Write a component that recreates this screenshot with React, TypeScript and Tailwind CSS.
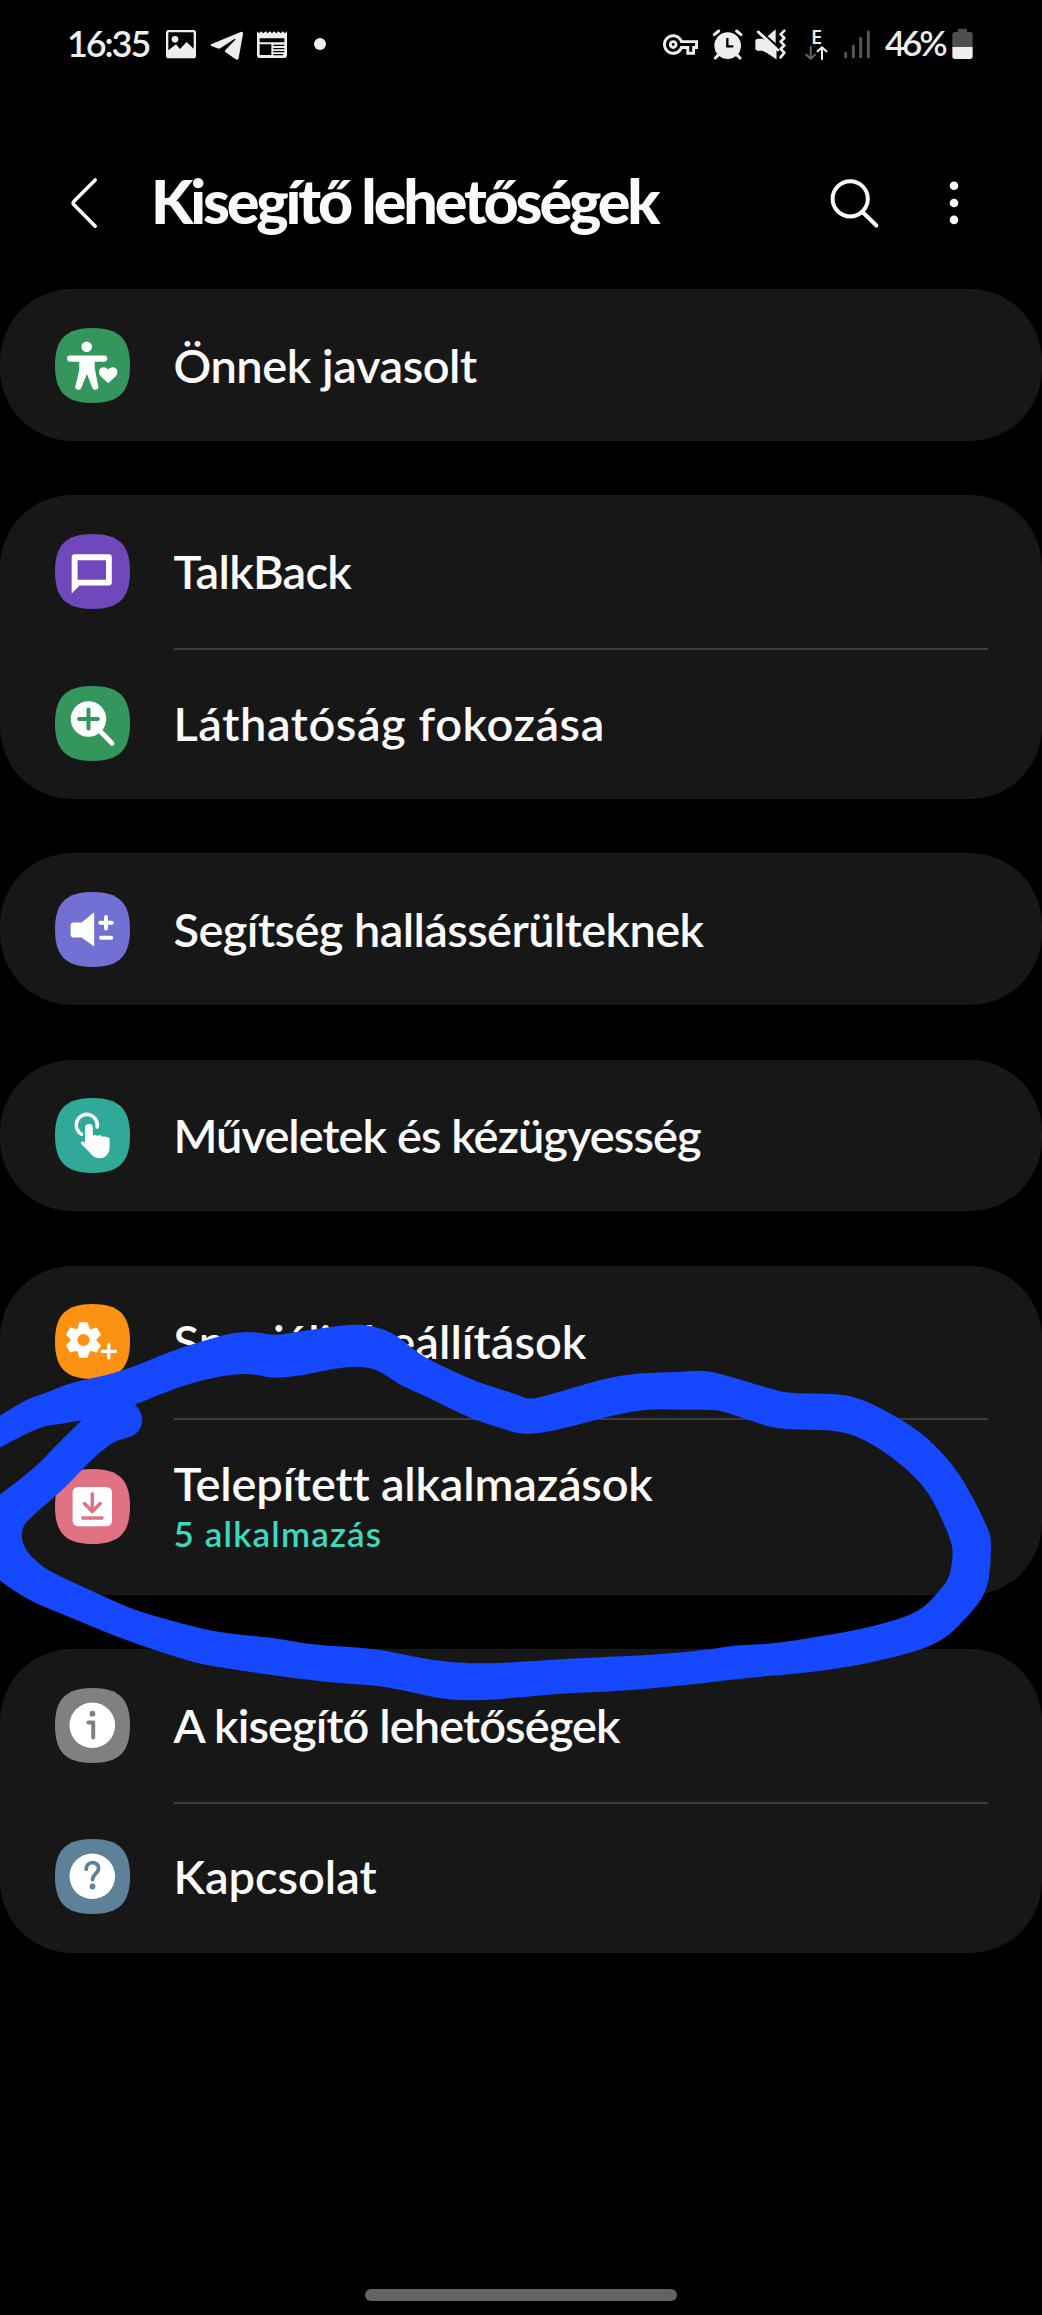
import React from 'react';
import { MdOutlineVpnKey } from 'react-icons/md';

interface SettingItem {
  label: string;
  tracking: string;
  tile: string;
  icon: React.ReactNode;
  sub?: string;
}

type Point = [number, number];

// Closed curve through the midpoints of the given points
const smooth = (pts: Point[]) => {
  const mid = (a: Point, b: Point) => `${(a[0] + b[0]) / 2} ${(a[1] + b[1]) / 2}`;
  const last = pts[pts.length - 1];
  return `M${mid(last, pts[0])}` + pts.map((p, i) => `Q${p[0]} ${p[1]} ${mid(p, pts[(i + 1) % pts.length])}`).join('') + 'Z';
};

const markerOutline: Point[] = [
  [-20, 1428], [0, 1415.7], [29, 1398], [46.5, 1393], [69, 1383], [119, 1372.7], [172, 1350.7], [210, 1339], [234, 1332], [258, 1332],
  [272, 1335.7], [293, 1332.7], [337.5, 1326], [358, 1324], [382, 1328], [399, 1337], [420, 1355], [448, 1369], [482, 1384], [516.5, 1394],
  [529, 1400], [552, 1394], [586, 1384], [607, 1378], [638, 1373], [680, 1372], [704, 1370], [725, 1375], [763, 1386.7], [790, 1394],
  [835, 1393], [863, 1399], [899, 1418], [927, 1437], [954.5, 1466.7], [973.5, 1498], [987, 1526.7], [991, 1536.7], [991, 1563], [986.7, 1593],
  [966.6, 1618], [946, 1638], [921.7, 1650], [859.5, 1665.7], [797, 1674], [745, 1677.7], [700, 1684], [614, 1691.7], [569, 1693], [500, 1699],
  [489, 1700], [444, 1700.5], [386, 1685.7], [327, 1682.7], [265, 1674], [207, 1665.7], [179, 1658], [119, 1638], [69, 1616.7], [34, 1602.7],
  [14, 1590.7], [0, 1580.7], [-20, 1565],
];

const markerGap: Point[] = [
  [-20, 1458], [0, 1447.7], [14, 1440], [41, 1426.7], [60, 1424], [80, 1420.5], [82, 1420], [81, 1421], [55, 1446.7], [36, 1466.7], [0, 1495], [-20, 1508],
];

const markerInside: Point[] = [
  [134, 1404.5], [138, 1407.5], [142, 1415], [142.5, 1423], [139, 1431], [133, 1436], [124, 1438.5], [112, 1442.5], [91, 1460], [79, 1473],
  [62, 1490.7], [31, 1516.7], [21, 1529], [23, 1548], [43, 1568], [69, 1580.7], [107, 1598], [134, 1610], [179, 1623], [220, 1633],
  [275.5, 1638], [313, 1645], [372, 1648], [413, 1656.7], [451, 1663], [492, 1663.5], [534.6, 1661], [604, 1656.7], [645, 1655.7],
  [707, 1650], [735, 1645], [773, 1644], [825, 1635.7], [863, 1629], [908, 1616.7], [927, 1605], [937, 1593], [949, 1580], [953, 1556.7],
  [952, 1543], [941, 1516.7], [930, 1495], [915, 1476.7], [897.5, 1461.7], [873, 1444], [842, 1430], [783, 1429.5], [763, 1425],
  [738.5, 1416.7], [718, 1409.5], [690, 1410], [655.5, 1409], [635, 1411], [604, 1417.7], [566, 1428], [541.5, 1433], [521, 1434.5],
  [500, 1428], [468, 1417.7], [423.5, 1395], [399, 1385], [379, 1370], [358, 1366], [330.6, 1369], [303, 1375.7], [272, 1378.5],
  [255, 1374], [234, 1374], [207, 1379], [175.6, 1388], [142, 1402],
];

const AccessibilityIcon = () => (
  <>
    <circle cx="31.7" cy="18.7" r="5.3" />
    <rect x="12" y="27.5" width="40.3" height="6.2" rx="3.1" />
    <path d="M24.3 30H39.7V40L43 57.2A3 3 0 0 1 37.4 60L31.9 46 26.2 60A3 3 0 0 1 20.6 57.4L24.3 42Z" />
    <path d="M53.2 55.3 45.4 48C43.2 45.4 43.6 41.4 46.4 39.8 49 38.4 51.9 39.4 53.2 41.6 54.5 39.4 57.4 38.4 60 39.8 62.8 41.4 63.2 45.4 61 48Z" />
  </>
);

const ChatIcon = () => (
  <path fillRule="evenodd" d="M16.7 59.5V23.2A3 3 0 0 1 19.7 20.2H53.8A3 3 0 0 1 56.8 23.2V48.6A3 3 0 0 1 53.8 51.6H24.5ZM22.6 26.2V45.7H51V26.2Z" />
);

const MagnifyIcon = () => (
  <>
    <circle cx="33.5" cy="33" r="17.8" />
    <path d="M46 46 57 57.4" stroke="#fff" strokeWidth="4.8" strokeLinecap="round" />
    <path d="M33.5 23.6V42.4M24.1 33H42.9" stroke="#35965d" strokeWidth="4" strokeLinecap="round" />
  </>
);

const HearingIcon = () => (
  <>
    <path d="M39.2 20.2V54.5L26.5 45.4H18.4A2.8 2.8 0 0 1 15.6 42.6V33.4A2.8 2.8 0 0 1 18.4 30.6H26.5Z" />
    <path d="M51 25V36.6M45.2 30.8H56.8M46 45.8H56.2" stroke="#fff" strokeWidth="4" strokeLinecap="round" />
  </>
);

const TouchIcon = () => (
  <>
    <path d="M26.5 36.2A10.6 10.6 0 1 1 42.2 29" fill="none" stroke="#fff" strokeWidth="3.6" strokeLinecap="round" />
    <path d="M30 30A3.9 3.9 0 0 1 37.8 30V37.6Q40.3 36 42.6 38 45.3 36.4 47.4 38.8 50.8 37.6 54.6 40.2V49C54.6 56 50.5 60.2 44.6 60.2 40 60.2 37.4 58.2 34.8 54.6L26 45.8C25.2 43.4 27.4 42.6 30 44.6Z" />
  </>
);

const GearPlusIcon = () => (
  <>
    <g transform="translate(28.5 36)">
      <circle r="9.6" fill="none" stroke="#fff" strokeWidth="7" />
      <g stroke="#fff" strokeWidth="1.6" strokeLinejoin="round">
        <path d="M-3.6-17H3.6L5.2-11H-5.2Z" />
        <path d="M-3.6-17H3.6L5.2-11H-5.2Z" transform="rotate(60)" />
        <path d="M-3.6-17H3.6L5.2-11H-5.2Z" transform="rotate(120)" />
        <path d="M-3.6-17H3.6L5.2-11H-5.2Z" transform="rotate(180)" />
        <path d="M-3.6-17H3.6L5.2-11H-5.2Z" transform="rotate(240)" />
        <path d="M-3.6-17H3.6L5.2-11H-5.2Z" transform="rotate(300)" />
      </g>
    </g>
    <path d="M53.8 40.6V54M47.1 47.3H60.5" stroke="#fff" strokeWidth="3.2" strokeLinecap="round" />
  </>
);

const DownloadIcon = () => (
  <>
    <rect x="17.6" y="18" width="39.4" height="39.3" rx="5.5" />
    <path d="M37.3 24.8V41.6M29.4 34.6 37.3 42.4 45.2 34.6M27.7 49H46.9" fill="none" stroke="#e07284" strokeWidth="3.5" strokeLinecap="round" strokeLinejoin="round" />
  </>
);

const InfoIcon = () => (
  <>
    <circle cx="37.3" cy="37.3" r="22.8" />
    <circle cx="37.4" cy="25.7" r="2.9" fill="#808080" />
    <path d="M33.4 34.6H38.2V49.4" fill="none" stroke="#808080" strokeWidth="4" strokeLinecap="round" strokeLinejoin="round" />
  </>
);

const HelpIcon = () => (
  <>
    <circle cx="37.3" cy="37.3" r="22.8" />
    <path d="M31.2 30.2C31.2 21.6 43.6 21.4 43.6 29.4 43.6 34.4 37.6 35 37.6 40.4" fill="none" stroke="#5f8099" strokeWidth="3.8" strokeLinecap="round" />
    <circle cx="37.5" cy="47.4" r="2.9" fill="#5f8099" />
  </>
);

const groups: SettingItem[][] = [
  [{ label: 'Önnek javasolt', tracking: 'tracking-[-0.45px]', tile: '#35965d', icon: <AccessibilityIcon /> }],
  [
    { label: 'TalkBack', tracking: 'tracking-[-0.7px]', tile: '#7048bc', icon: <ChatIcon /> },
    { label: 'Láthatóság fokozása', tracking: 'tracking-[0.58px]', tile: '#35965d', icon: <MagnifyIcon /> },
  ],
  [{ label: 'Segítség hallássérülteknek', tracking: 'tracking-[-0.6px]', tile: '#7270d3', icon: <HearingIcon /> }],
  [{ label: 'Műveletek és kézügyesség', tracking: 'tracking-[-0.97px]', tile: '#30a999', icon: <TouchIcon /> }],
  [
    { label: 'Speciális beállítások', tracking: 'tracking-[0.05px]', tile: '#fc9112', icon: <GearPlusIcon /> },
    { label: 'Telepített alkalmazások', tracking: 'tracking-[-0.2px]', tile: '#e07284', icon: <DownloadIcon />, sub: '5 alkalmazás' },
  ],
  [
    { label: 'A kisegítő lehetőségek', tracking: 'tracking-[-0.92px]', tile: '#808080', icon: <InfoIcon /> },
    { label: 'Kapcsolat', tracking: 'tracking-[-0.05px]', tile: '#5f8099', icon: <HelpIcon /> },
  ],
];

const StatusBar = () => (
  <div className="flex h-[88px] items-center justify-between pr-[69px] pl-[67px] text-[#eee]">
    <div className="flex items-center">
      <span className="w-[99px] pb-[2px] text-[36px] leading-[44px] font-semibold tracking-[-2.1px]">16:35</span>
      <svg className="mr-[14px]" width="30" height="32" viewBox="0 0 90 96" fill="currentColor">
        <path fillRule="evenodd" d="M8 6H82Q90 6 90 14V83Q90 91 82 91H8Q0 91 0 83V14Q0 6 8 6ZM7 13V67L30 49 42 63 62 42 83 62V13Z" />
        <circle cx="27" cy="34" r="10" />
      </svg>
      <svg className="mr-[13px]" width="34" height="32" viewBox="0 0 102 96" fill="currentColor">
        <path d="M3 49 92 12Q100 9 99 18L86 90Q84 98 76 93L47 73Q43 70 47 65L76 35Q78 31 73 33L31 61Q27 63 22 61L4 54Q0 51 3 49Z" />
      </svg>
      <svg width="30" height="32" viewBox="0 0 90 96" fill="currentColor">
        <path fillRule="evenodd" d="M0 10 6 16 12 10 19 16 26 10 32 16 39 10 45 16 51 10 58 16 64 10 71 16 77 10 84 16 90 10V82Q90 90 82 90H8Q0 90 0 82ZM8 31V43H82V31ZM8 49V81H43V49ZM49 50V54H82V50ZM49 60V64H82V60ZM49 69V73H82V69ZM49 78V82H78V78Z" />
      </svg>
      <span className="ml-[27px] size-3 rounded-full bg-[#eee]" />
    </div>
    <div className="flex items-center">
      <MdOutlineVpnKey className="mr-[14px] h-[35px] w-[35px]" />
      <svg className="mr-[12px]" width="31" height="32" viewBox="0 0 93 96" fill="currentColor">
        <circle cx="47" cy="53" r="40" />
        <g stroke="currentColor" strokeWidth="9" strokeLinecap="round" fill="none">
          <path d="M7 20 20 9M87 20 74 9M20 80 10 90M74 80 84 90" />
        </g>
        <path d="M46 30V55H64" fill="none" stroke="#000" strokeWidth="7" />
      </svg>
      <svg className="mr-[19px]" width="31" height="32" viewBox="0 0 93 96" fill="currentColor">
        <path d="M62 4V46L38 25ZM1 40Q1 32 9 32H20L64 72V94L36 75L22 68H9Q1 68 1 60Z" />
        <path d="M20 32 36 38 64 64V92L34 72 20 66Z" />
        <path d="M10 12 68 66" fill="none" stroke="currentColor" strokeWidth="9" strokeLinecap="round" />
        <path d="M88 8 77 19 88 30 77 41 88 52 77 63 88 74 77 88" fill="none" stroke="currentColor" strokeWidth="8" strokeLinejoin="round" strokeLinecap="round" />
      </svg>
      <div className="mr-[16px] flex h-8 w-[23px] flex-col items-center justify-between">
        <span className="font-['Open_Sans'] text-[20px] leading-[18px] font-semibold">E</span>
        <svg width="23" height="14" viewBox="0 0 69 42" fill="none" strokeWidth="6" strokeLinecap="round" strokeLinejoin="round">
          <path d="M17 3V38M4 26 17 38 30 26" stroke="#666" />
          <path d="M51 39V4M38 16 51 4 64 16" stroke="currentColor" />
        </svg>
      </div>
      <svg className="mr-[14px]" width="27" height="32" viewBox="0 0 81 96" fill="none" stroke="#555" strokeWidth="9" strokeLinecap="round">
        <path d="M5 76V86M28 54V86M50 31V86M73 11V86" />
      </svg>
      <span className="w-[67px] pb-[5px] text-[35px] leading-[44px] font-semibold tracking-[-3.2px]">46%</span>
      <svg width="21" height="32" viewBox="0 0 63 96">
        <path d="M18 6Q18 2 22 2H41Q45 2 45 6V12H54Q62 12 62 20V58H1V20Q1 12 9 12H18Z" fill="#4f4f4f" />
        <path d="M1 57H62V85Q62 93 54 93H9Q1 93 1 85Z" fill="#eee" />
      </svg>
    </div>
  </div>
);

const Header = () => (
  <header className="mt-[28px] flex h-[173.3px] items-center">
    <svg className="ml-[68px]" width="32" height="56" viewBox="0 0 32 56" fill="none" stroke="#fafafa" strokeWidth="3.6" strokeLinecap="round" strokeLinejoin="round">
      <path d="M27.2 5 6 26.2Q4.2 28 6 29.8L27.2 51.2" />
    </svg>
    <h1 className="ml-[51px] flex-1 pb-[4px] text-[61px] leading-[74px] font-black tracking-[-3.15px] whitespace-nowrap">Kisegítő lehetőségek</h1>
    <svg className="mr-[60px]" width="56" height="56" viewBox="0 0 56 56" fill="none" stroke="#fafafa" strokeWidth="4" strokeLinecap="round">
      <circle cx="26.2" cy="23.8" r="17.6" />
      <path d="M39 37.5 52.4 50.5" />
    </svg>
    <svg className="mr-[74px]" width="28" height="56" viewBox="0 0 28 56" fill="#fafafa">
      <circle cx="14" cy="10.8" r="4.3" />
      <circle cx="14" cy="28" r="4.3" />
      <circle cx="14" cy="44.9" r="4.3" />
    </svg>
  </header>
);

const Row: React.FC<{ item: SettingItem }> = ({ item }) => (
  <div className={`flex items-center ${item.sub ? 'h-[177.5px]' : 'h-[151.7px]'}`}>
    <svg className="ml-[55px] shrink-0" width="75" height="75" viewBox="0 0 75 75" fill="#fff">
      <path d="M37.5 0C64 0 75 11 75 37.5S64 75 37.5 75 0 64 0 37.5 11 0 37.5 0Z" fill={item.tile} />
      {item.icon}
    </svg>
    <div className="ml-[43.5px] flex flex-col pb-px">
      <span className={`text-[47px] leading-[56px] font-semibold whitespace-nowrap ${item.tracking}`}>{item.label}</span>
      {item.sub && <span className="text-[35px] leading-[45px] font-semibold tracking-[1.15px] text-[#3cd8bf]">{item.sub}</span>}
    </div>
  </div>
);

export default function App() {
  return (
    <div className="relative flex h-[2315px] w-[1042px] flex-col overflow-hidden bg-black font-[Lato,sans-serif] text-[#fafafa]">
      <StatusBar />
      <Header />
      <main className="flex flex-col gap-[54.5px]">
        {groups.map((items) => (
          <section key={items[0].label} className="rounded-[72px] bg-[#171717]">
            {items.map((item, i) => (
              <React.Fragment key={item.label}>
                {i > 0 && <div className="mr-[54px] -mb-[2px] ml-[174px] h-[2px] translate-y-px bg-[#3c3c3c]" />}
                <Row item={item} />
              </React.Fragment>
            ))}
          </section>
        ))}
      </main>
      <div className="mx-auto mt-auto mb-[14px] h-[12px] w-[312px] rounded-full bg-[#636363]" />
      {/* hand-drawn marker loop */}
      <svg className="pointer-events-none absolute inset-0" width="1042" height="2315" viewBox="0 0 1042 2315">
        <path d={smooth(markerOutline) + smooth(markerGap) + smooth(markerInside)} fill="#1548ff" fillRule="evenodd" />
      </svg>
    </div>
  );
}
